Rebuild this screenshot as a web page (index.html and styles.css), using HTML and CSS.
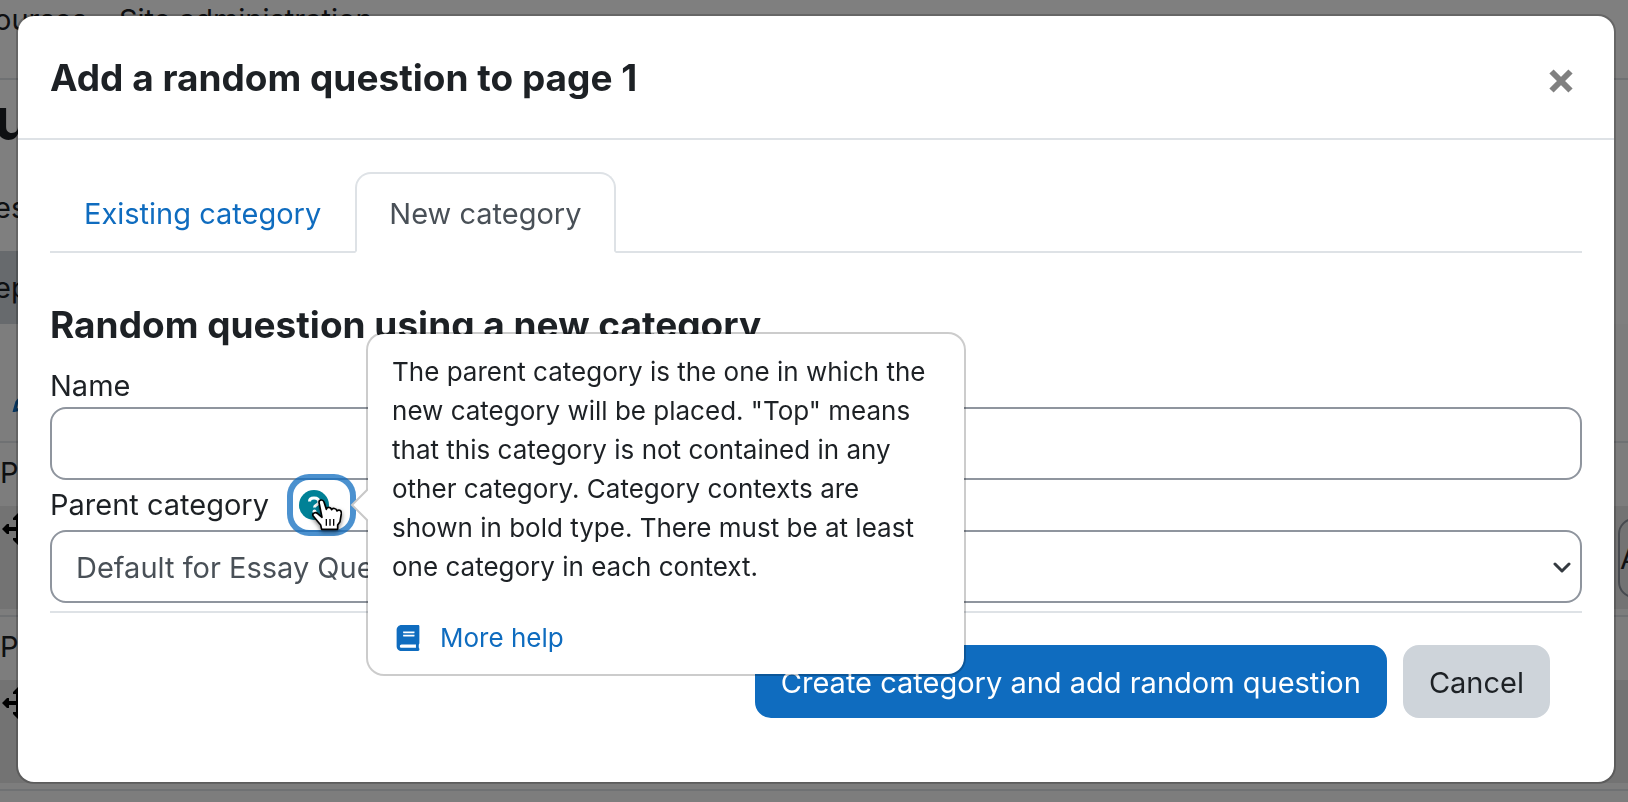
FILE: index.html
```
<!DOCTYPE html>
<html lang="en">
<head>
    <meta charset="UTF-8">
    <meta name="viewport" content="width=device-width, initial-scale=1.0">
    <title>Add a random question to page 1</title>
    <link rel="stylesheet" href="styles.css">
</head>
<body>

    <div class="page">
        <div class="navbar">
            <a href="#">ourses</a>
            <a href="#">Site administration</a>
        </div>
        <h1>u</h1>
        <p class="info">es</p>
        <button class="repaginate" type="button">ep</button>
        <div class="edit-title">
            <svg class="pencil" viewBox="0 0 24 24"><path d="M2 22 L5 11 L14 0 L22 8 L11 20 Z" fill="none" stroke="#0f6cbf" stroke-width="4"/></svg>
        </div>
        <div class="slot">
            <div class="slot-page">Page</div>
            <div class="slot-row">
                <svg class="move" viewBox="0 0 32 32"><path d="M16 0 L21 5 V7 H18 V14 H25 V11 H27 L32 16 L27 21 H25 V18 H18 V25 H21 V27 L16 32 L11 27 V25 H14 V18 H7 V21 H5 L0 16 L5 11 H7 V14 H14 V7 H11 V5 Z"/></svg>
                <button class="mark" type="button">A</button>
            </div>
        </div>
        <div class="slot">
            <div class="slot-page">Page</div>
            <div class="slot-row">
                <svg class="move" viewBox="0 0 32 32"><path d="M16 0 L21 5 V7 H18 V14 H25 V11 H27 L32 16 L27 21 H25 V18 H18 V25 H21 V27 L16 32 L11 27 V25 H14 V18 H7 V21 H5 L0 16 L5 11 H7 V14 H14 V7 H11 V5 Z"/></svg>
            </div>
        </div>
        <div class="slot"></div>
    </div>

    <div class="backdrop">
        <div class="modal" role="dialog" aria-labelledby="modal-title">
            <div class="modal-header">
                <h2 id="modal-title">Add a random question to page 1</h2>
                <button class="close" type="button" aria-label="Close">
                    <svg viewBox="0 0 24 24"><path d="M2.5 2.5 L21.5 21.5 M21.5 2.5 L2.5 21.5" stroke="#808080" stroke-width="6"/></svg>
                </button>
            </div>
            <div class="modal-body">
                <div class="tabs">
                    <a href="#">Existing category</a>
                    <a href="#" class="active">New category</a>
                </div>

                <form>
                    <h3>Random question using a new category</h3>
                    <label for="name">Name</label>
                    <input class="control" type="text" id="name">
                    <div class="label-row">
                        <label for="parent">Parent category</label>
                        <div class="help">
                            <button class="help-btn" type="button" aria-label="Help with Parent category">
                                <svg viewBox="0 0 30 30">
                                    <circle cx="15" cy="15" r="15" fill="#008196"/>
                                    <path d="M10.500 11.500 C10.500 8.500 13 8 15 8 C18 8 20 9.500 20 12 C20 15 15.500 14.500 15.500 17.500" fill="none" stroke="#fff" stroke-width="3"/>
                                    <circle cx="15.500" cy="21.500" r="2" fill="#fff"/>
                                </svg>
                            </button>
                            <div class="popover">
                                <svg class="arrow" viewBox="0 0 18 34"><path d="M18 1 L2 17 L18 33" fill="#fff" stroke="#c8c8c8" stroke-width="2"/></svg>
                                <p>The parent category is the one in which the new category will be placed. "Top" means that this category is not contained in any other category. Category contexts are shown in bold type. There must be at least one category in each context.</p>
                                <a href="#">
                                    <svg class="book" viewBox="0 0 448 512"><path fill="#0f6cbf" fill-rule="evenodd" d="M448 360V24c0-13.300-10.700-24-24-24H96C43 0 0 43 0 96v320c0 53 43 96 96 96h328c13.300 0 24-10.700 24-24v-16c0-7.500-3.500-14.300-8.900-18.700-4.200-15.400-4.200-59.300 0-74.700 5.400-4.300 8.900-11.100 8.900-18.600zM128 134c0-3.300 2.700-6 6-6h212c3.300 0 6 2.700 6 6v20c0 3.300-2.700 6-6 6H134c-3.300 0-6-2.700-6-6v-20zm0 64c0-3.300 2.700-6 6-6h212c3.300 0 6 2.700 6 6v20c0 3.300-2.700 6-6 6H134c-3.300 0-6-2.700-6-6v-20zm253.400 250H96c-17.700 0-32-14.300-32-32 0-17.600 14.400-32 32-32h285.400c-1.900 17.100-1.900 46.900 0 64z"/></svg>More help</a>
                            </div>
                            <svg class="pointer" viewBox="0 0 90 99">
                                <path d="M21 10 C21 1 33 1 36 9 L43 31 C45 23 56 23 59 32 C61 26 73 27 75 36 C79 31 89 33 88 44 L84 68 L77 78 V91 H29 L26 78 L11 60 L3 50 C0 42 11 38 17 44 L30 55 Z" fill="#fff" stroke="#000" stroke-width="5" stroke-linejoin="round"/>
                                <path d="M43 60 V80 M54 60 V80 M65 60 V80" stroke="#000" stroke-width="4"/>
                            </svg>
                        </div>
                    </div>
                    <div class="select-wrap">
                        <select class="control" id="parent">
                            <option>Default for Essay Questions</option>
                        </select>
                        <svg class="chevron" viewBox="0 0 18 12"><path d="M2 2 L9 9 L16 2" fill="none" stroke="#343a40" stroke-width="3" stroke-linecap="round" stroke-linejoin="round"/></svg>
                    </div>
                    <div class="buttons">
                        <button class="btn primary" type="button">Create category and add random question</button>
                        <button class="btn secondary" type="button">Cancel</button>
                    </div>
                </form>
            </div>
        </div>
    </div>

</body>
</html>
```
FILE: styles.css
```
*{
    box-sizing: border-box;
}
body,h1,h2,h3,p{
    margin: 0;
}
body{
    font-family: Inter, "Liberation Sans", sans-serif;
    font-size: 29px;line-height: 45px;color: #1d2125;
    background: #fff;overflow: hidden;
}
button,input,select{
    font: inherit;color: inherit;
}
a{
    color: #0f6cbf;text-decoration: none;
}
svg{
    display: block;
}

/* page behind the dialog */
.page{
    height: 100vh;overflow: hidden;
}
.navbar{
    height: 80px;border-bottom: 2px solid #dee2e6;display: flex;gap: 32px;line-height: 40px;
    margin-left: -6px;
}
.navbar a{
    color: #1d2125;
}
.page h1{
    font-size: 58px;line-height: 70px;padding-top: 4px;margin-left: -6px;
}
.info{
    padding-top: 32px;line-height: 44px;margin-left: -6px;
}
.repaginate{
    display: block;margin: 21px 0 0 -6px;height: 73px;width: 120px;padding: 0;border: 0;
    background: #ced4da;text-align: left;
}
.edit-title{
    height: 117px;padding: 70px 0 0 10px;background: #fafafa;
}
.pencil{
    width: 24px;height: 18px;
}
.slot{
    height: 174px;border-top: 2px solid #dee2e6;background: #fafafa;
}
.slot-page{
    height: 63px;line-height: 60px;
}
.slot-row{
    height: 103px;background: #e6e6e6;display: flex;justify-content: space-between;padding-top: 12px;
}
.move{
    width: 32px;height: 32px;margin: -5px 0 0 2px;
}
.mark{
    width: 80px;height: 80px;margin-right: -70px;padding: 0;border: 2px solid #8f959e;border-radius: 16px;
    background: none;text-align: left;
}

/* dialog */
.backdrop{
    position: fixed;top: 0;right: 0;bottom: 0;left: 0;
    padding: 14px 12px 18px 16px;background: rgba(0,0,0,0.5);
}
.modal{
    background: #fff;background-clip: padding-box;
    border: 2px solid rgba(0,0,0,0.2);border-radius: 18px;
}
.modal-header{
    display: flex;justify-content: space-between;align-items: center;
    padding: 34px 32px 32px;height: 124px;border-bottom: 2px solid #dee2e6;
}
h2,h3{
    font-size: 37px;line-height: 44px;font-weight: 700;
}
.close{
    border: 0;background: none;padding: 14px 9px 8px;
}
.close svg{
    width: 24px;height: 24px;
}
.modal-body{
    padding: 32px 32px 64px;
}
.tabs{
    display: flex;border-bottom: 2px solid #dee2e6;
}
.tabs a{
    padding: 17px 32px 15px;margin-bottom: -2px;
    border: 2px solid transparent;border-radius: 16px 16px 0 0;
}
.tabs .active{
    color: #495057;background: #fff;border-color: #dee2e6 #dee2e6 #fff;
}
h3{
    margin: 50px 0 18px;
}
label{
    display: block;line-height: 42px;
}
.control{
    display: block;width: 100%;height: 73px;padding: 13px 24px 11px;
    border: 2px solid #8f959e;border-radius: 16px;background: #fff;color: #495057;
    appearance: none;
}
.label-row{
    display: flex;align-items: center;gap: 24px;
}
.help{
    position: relative;z-index: 1;
}
.help-btn{
    display: block;width: 57px;height: 50px;padding: 0 6px;border: 0;border-radius: 16px;background: none;
    box-shadow: 0 0 0 6px rgba(15,108,191,0.75);
}
.help-btn svg{
    width: 30px;height: 30px;
}
.popover{
    position: absolute;left: 73px;top: -148px;width: 600px;padding: 18px 24px 17px;
    font-size: 26px;line-height: 39px;
    background: #fff;background-clip: padding-box;
    border: 2px solid rgba(0,0,0,0.2);border-radius: 18px;
}
.popover p{
    margin-bottom: 32px;
}
.popover a{
    display: flex;align-items: center;
}
.arrow{
    position: absolute;left: -18px;top: 154px;width: 18px;height: 34px;
}
.book{
    width: 32px;height: 26px;margin-right: 16px;
}
.pointer{
    position: absolute;left: 19px;top: 19px;width: 30px;height: 33px;
    filter: drop-shadow(0 2px 2px rgba(0,0,0,0.5));
}
.select-wrap{
    position: relative;padding-bottom: 8px;border-bottom: 2px solid #dee2e6;
}
.chevron{
    position: absolute;right: 11px;top: 32px;width: 18px;height: 12px;
}
.buttons{
    display: flex;justify-content: flex-end;gap: 16px;padding: 32px 32px 0;
}
.btn{
    padding: 13px 24px 11px;border: 2px solid transparent;border-radius: 16px;
}
.primary{
    background: #0f6cbf;border-color: #0f6cbf;color: #fff;
}
.secondary{
    background: #ced4da;border-color: #ced4da;
}
```
